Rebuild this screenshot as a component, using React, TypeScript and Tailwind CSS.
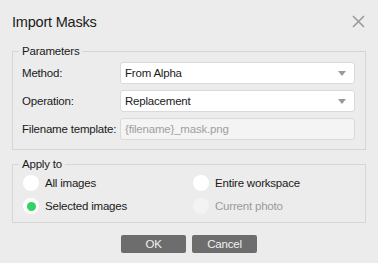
import React from "react";

function Select({ value }: { value: string }) {
  return (
    <div className="flex-1 h-[22px] bg-white border border-[#dadada] rounded-[3px] flex items-center justify-between pl-[4px] pr-[8px] text-[#1a1a1a]">
      <span>{value}</span>
      <svg width="8" height="5" viewBox="0 0 8 5"><path d="M0 0H8L4 5Z" fill="#9a9a9a" /></svg>
    </div>
  );
}

function Radio({ label, checked, disabled }: { label: string; checked?: boolean; disabled?: boolean }) {
  return (
    <div className="flex items-center gap-[6px] h-[16px]">
      <div className={`w-[16px] h-[16px] rounded-full flex items-center justify-center ${disabled ? "bg-[#f3f3f3]" : "bg-white"}`}>
        {checked && <div className="w-[9px] h-[9px] rounded-full bg-[#2fd463]" />}
      </div>
      <span className={disabled ? "text-[#9a9a9a]" : "text-[#1a1a1a]"}>{label}</span>
    </div>
  );
}

export default function App() {
  return (
    <div className="w-[378px] h-[263px] bg-[#ececec] text-[11.5px] tracking-[-0.2px] leading-[16px] text-[#1a1a1a] flex flex-col whitespace-nowrap" style={{ fontFamily: '"Liberation Sans", sans-serif' }}>
      <div className="flex items-center justify-between h-[44px] pl-[12px] pr-[13px] pt-[1px] pb-[2px]">
        <span className="text-[14.5px] tracking-[-0.2px] text-[#1a1a1a]">Import Masks</span>
        <svg width="13" height="13" viewBox="0 0 13 13"><path d="M1 1L12 12M12 1L1 12" stroke="#9a9a9a" strokeWidth="1.6" /></svg>
      </div>
      <fieldset className="mx-[12px] border border-[#d6d6d6] p-0 m-0 mt-0">
        <legend className="ml-[6px] px-[3px] leading-[14px]">Parameters</legend>
        <div className="flex flex-col gap-[6px] pl-[9px] pr-[10px] pt-[4px] pb-[9px]">
          <div className="flex items-center">
            <span className="w-[98px] shrink-0">Method:</span>
            <Select value="From Alpha" />
          </div>
          <div className="flex items-center">
            <span className="w-[98px] shrink-0">Operation:</span>
            <Select value="Replacement" />
          </div>
          <div className="flex items-center">
            <span className="w-[98px] shrink-0">Filename template:</span>
            <div className="flex-1 h-[22px] bg-[#f4f4f4] border border-[#dadada] rounded-[3px] flex items-center pl-[4px] text-[#a0a0a0]">
              {"{filename}_mask.png"}
            </div>
          </div>
        </div>
      </fieldset>
      <fieldset className="mx-[12px] mt-[7px] border border-[#d6d6d6] p-0">
        <legend className="ml-[6px] px-[3px] leading-[14px]">Apply to</legend>
        <div className="grid grid-cols-[170px_1fr] gap-y-[7px] pl-[10px] pt-[4px] pb-[8px]">
          <Radio label="All images" />
          <Radio label="Entire workspace" />
          <Radio label="Selected images" checked />
          <Radio label="Current photo" disabled />
        </div>
      </fieldset>
      <div className="flex justify-center gap-[6px] mt-[12px]">
        <button className="w-[65px] h-[18px] rounded-[2px] bg-[#6d6d6d] text-[#f2f2f2] leading-[18px]">OK</button>
        <button className="w-[65px] h-[18px] rounded-[2px] bg-[#6d6d6d] text-[#f2f2f2] leading-[18px]">Cancel</button>
      </div>
    </div>
  );
}
